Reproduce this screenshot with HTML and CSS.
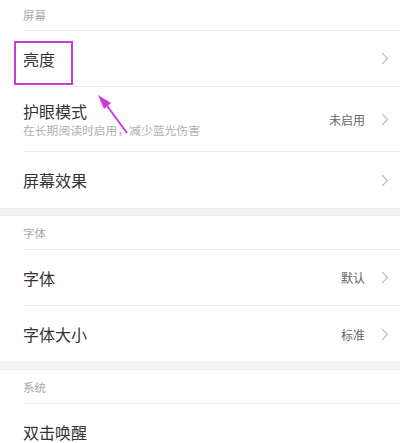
FILE: index.html
```html
<!DOCTYPE html>
<html lang="zh">
<head>
<meta charset="utf-8">
<link rel="stylesheet" href="styles.css">
</head>
<body>
<div class="page">
  <div class="group">
    <div class="header first">屏幕</div>
    <div class="row">
      <div class="main"><div class="title">亮度</div></div>
      <div class="chev"><svg width="8" height="13" viewBox="0 0 8 13"><path d="M1 1 L6.5 6.5 L1 12" fill="none" stroke="#bdbdbd" stroke-width="1.2"/></svg></div>
    </div>
    <div class="row tall">
      <div class="main">
        <div class="title">护眼模式</div>
        <div class="sub">在长期阅读时启用，减少蓝光伤害</div>
      </div>
      <div class="value">未启用</div>
      <div class="chev"><svg width="8" height="13" viewBox="0 0 8 13"><path d="M1 1 L6.5 6.5 L1 12" fill="none" stroke="#bdbdbd" stroke-width="1.2"/></svg></div>
    </div>
    <div class="row last">
      <div class="main"><div class="title">屏幕效果</div></div>
      <div class="chev"><svg width="8" height="13" viewBox="0 0 8 13"><path d="M1 1 L6.5 6.5 L1 12" fill="none" stroke="#bdbdbd" stroke-width="1.2"/></svg></div>
    </div>
  </div>
  <div class="band"></div>
  <div class="group">
    <div class="header">字体</div>
    <div class="row">
      <div class="main"><div class="title">字体</div></div>
      <div class="value">默认</div>
      <div class="chev"><svg width="8" height="13" viewBox="0 0 8 13"><path d="M1 1 L6.5 6.5 L1 12" fill="none" stroke="#bdbdbd" stroke-width="1.2"/></svg></div>
    </div>
    <div class="row last">
      <div class="main"><div class="title">字体大小</div></div>
      <div class="value">标准</div>
      <div class="chev"><svg width="8" height="13" viewBox="0 0 8 13"><path d="M1 1 L6.5 6.5 L1 12" fill="none" stroke="#bdbdbd" stroke-width="1.2"/></svg></div>
    </div>
  </div>
  <div class="band"></div>
  <div class="group">
    <div class="header">系统</div>
    <div class="row last">
      <div class="main"><div class="title">双击唤醒</div></div>
    </div>
  </div>

  <div class="highlight"></div>
  <svg class="arrow" width="60" height="60" viewBox="0 0 60 60">
    <line x1="41" y1="47" x2="16" y2="13" stroke="#cf3ae0" stroke-width="2"/>
    <polygon points="12,9 25,17 18,23" fill="#cf3ae0"/>
  </svg>
</div>
</body>
</html>
```

FILE: styles.css
```css
html, body {
  margin: 0;
  padding: 0;
  background: #ffffff;
}
body {
  font-family: "Noto Sans CJK SC", "Noto Sans", sans-serif;
  color: #333333;
}
.page {
  position: relative;
  width: 400px;
  height: 443px;
  overflow: hidden;
}
.group {
  display: flex;
  flex-direction: column;
}
.header {
  height: 34px;
  display: flex;
  align-items: center;
  margin-left: 23px;
  font-size: 11.5px;
  color: #a8a8a8;
  border-bottom: 1px solid #ececec;
  box-sizing: border-box;
  padding-top: 1px;
}
.header.first {
  height: 31px;
  padding-top: 0;
}
.row {
  height: 56px;
  display: flex;
  align-items: center;
  margin-left: 23px;
  padding-right: 11px;
  border-bottom: 1px solid #ececec;
  box-sizing: border-box;
}
.row.tall {
  height: 65px;
}
.row.last {
  border-bottom: none;
}
.main {
  flex: 1;
  display: flex;
  flex-direction: column;
}
.title {
  font-size: 16px;
  line-height: 20px;
  color: #333333;
}
.sub {
  font-size: 11.8px;
  line-height: 16px;
  color: #b0b0b0;
  margin-top: 1px;
}
.value {
  font-size: 12px;
  color: #666666;
  margin-right: 16px;
}
.chev {
  width: 8px;
  height: 13px;
  display: flex;
}
.band {
  height: 8px;
  background: #f3f3f3;
  border-top: 1px solid #ebebeb;
  border-bottom: 1px solid #ebebeb;
  box-sizing: border-box;
}
.highlight {
  position: absolute;
  left: 14px;
  top: 41px;
  width: 59px;
  height: 44px;
  border: 2.5px solid #c93ad6;
  box-sizing: border-box;
}
.arrow {
  position: absolute;
  left: 86px;
  top: 86px;
}
```
